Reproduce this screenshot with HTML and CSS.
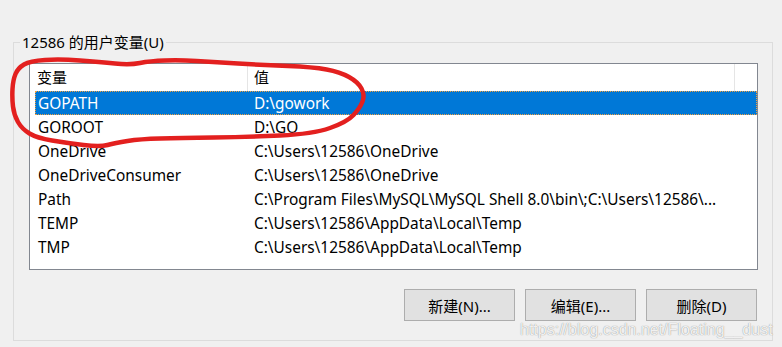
FILE: index.html
```html
<!DOCTYPE html>
<html lang="zh-CN">
<head>
    <meta charset="UTF-8">
    <title>环境变量</title>
    <link rel="stylesheet" href="styles.css">
</head>
<body>
    <fieldset class="group">
        <legend>12586 的用户变量(U)</legend>
        <div class="list">
            <div class="list-head">
                <div class="col-name">变量</div>
                <div class="col-value">值</div>
            </div>
            <div class="row selected">
                <div class="col-name">GOPATH</div>
                <div class="col-value">D:\gowork</div>
            </div>
            <div class="row">
                <div class="col-name">GOROOT</div>
                <div class="col-value">D:\GO</div>
            </div>
            <div class="row">
                <div class="col-name">OneDrive</div>
                <div class="col-value">C:\Users\12586\OneDrive</div>
            </div>
            <div class="row">
                <div class="col-name">OneDriveConsumer</div>
                <div class="col-value">C:\Users\12586\OneDrive</div>
            </div>
            <div class="row">
                <div class="col-name">Path</div>
                <div class="col-value">C:\Program Files\MySQL\MySQL Shell 8.0\bin\;C:\Users\12586\...</div>
            </div>
            <div class="row">
                <div class="col-name">TEMP</div>
                <div class="col-value">C:\Users\12586\AppData\Local\Temp</div>
            </div>
            <div class="row">
                <div class="col-name">TMP</div>
                <div class="col-value">C:\Users\12586\AppData\Local\Temp</div>
            </div>
        </div>
        <div class="btn-container">
            <button>新建(N)...</button>
            <button>编辑(E)...</button>
            <button>删除(D)</button>
        </div>
    </fieldset>

    <!-- 手画的红圈 -->
    <svg class="mark" width="782" height="347" viewBox="0 0 782 347">
        <path d="M165 60.5 Q180 60 196.5 61 Q213 62 238 63.5 Q263 65 288 66 Q313 67 326.5 69.5 Q340 72 349 77 Q358 82 361.5 88.5 Q365 95 362.5 101.5 Q360 108 353.5 115 Q347 122 330 128 Q313 134 280 135.5 Q247 137 213.5 137.5 Q180 138 160 138.5 Q140 139 127.5 141 Q115 143 107.5 145 Q100 147 83.5 145 Q67 143 52 140.5 Q37 138 29.5 133.5 Q22 129 18 122 Q14 115 13 106.5 Q12 98 12.5 89 Q13 80 15.5 74 Q18 68 24 64.5 Q30 61 45 60 Q60 59 80 60.5 Q100 62 115 63.5 Q130 65 140 63 Q150 61 165 60.5 Z"/>
    </svg>

    <div class="watermark">https://blog.csdn.net/Floating__dust</div>
</body>
</html>
```

FILE: styles.css
```css
*{
    margin: 0;
    padding: 0;
    box-sizing: border-box;
}
body{
    width: 782px;
    height: 347px;
    overflow: hidden;
    position: relative;
    background-color: #f0f0f0;
    font-family: "Noto Sans", "Noto Sans CJK SC", sans-serif;
    font-size: 15.4px;
    color: #000;
}
.group{
    margin: 32px 0 0 13px;
    width: 760px;
    height: 309px;
    border: 1px solid #dcdcdc;
    padding: 0;
}
.group legend{
    margin-left: 6px;
    padding: 0 2px;
    line-height: 20px;
    font-size: 15px;
}
.list{
    margin: 11px 0 0 15px;
    width: 729px;
    height: 207px;
    border: 1px solid #828790;
    background-color: #fff;
    padding-left: 5px;
}
.list-head{
    display: grid;
    grid-template-columns: 213px 487px;
    height: 27px;
    line-height: 27px;
    font-size: 15px;
}
.list-head .col-name{
    padding-left: 2px;
    border-right: 1px solid #e5e5e5;
}
.list-head .col-value{
    padding-left: 6px;
    border-right: 1px solid #e5e5e5;
}
.row{
    display: grid;
    grid-template-columns: 213px 487px;
    height: 24px;
    padding-top: 1px;
    line-height: 23px;
    white-space: nowrap;
}
.row .col-name{
    padding-left: 3px;
}
.row .col-value{
    padding-left: 6px;
}
.row.selected{
    background-color: #0078d7;
    color: #fff;
    outline: 1px dotted #f0a040;
    outline-offset: -1px;
}
.btn-container{
    margin: 19px 0 0 15px;
    width: 728px;
    display: flex;
    justify-content: flex-end;
    gap: 10px;
}
button{
    width: 111px;
    height: 32px;
    font-family: inherit;
    font-size: 15px;
    color: #000;
    background-color: #e1e1e1;
    border: 1px solid #adadad;
    outline: none;
}
.mark{
    position: absolute;
    left: 0;
    top: 0;
    pointer-events: none;
}
.mark path{
    fill: none;
    stroke: #e3201f;
    stroke-width: 4.5;
    stroke-linecap: round;
    stroke-linejoin: round;
}
.watermark{
    position: absolute;
    left: 520px;
    top: 320px;
    font-family: "Liberation Sans", Arial, sans-serif;
    font-size: 16px;
    line-height: 20px;
    color: rgba(255, 255, 255, 0.9);
    text-shadow: 0 0 1px rgba(0, 0, 0, 0.5);
    white-space: nowrap;
}
```
